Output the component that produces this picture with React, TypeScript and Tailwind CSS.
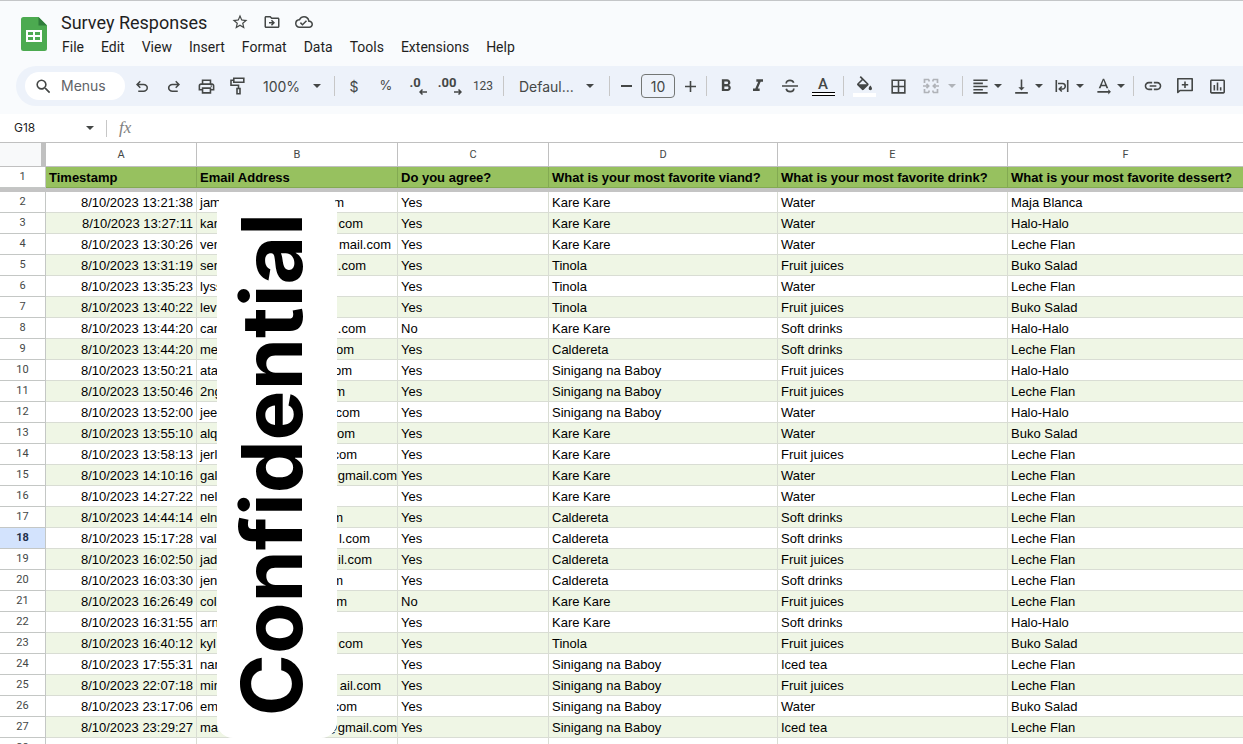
import type { ReactNode } from 'react'
import {
  MdBorderAll,
  MdFormatAlignLeft,
  MdFormatBold,
  MdFormatItalic,
  MdInsertChartOutlined,
  MdLink,
  MdOutlineCloudDone,
  MdOutlineDriveFileMove,
  MdOutlinePrint,
  MdSearch,
  MdStarBorder,
  MdTextRotationNone,
  MdVerticalAlignBottom,
} from 'react-icons/md'

interface ResponseRow {
  time: string
  emailStart: string
  emailEnd: string
  // space between the end of the address and the column edge
  emailGap: number
  agree: string
  viand: string
  drink: string
  dessert: string
}

const row = (
  time: string,
  emailStart: string,
  emailEnd: string,
  emailGap: number,
  agree: string,
  viand: string,
  drink: string,
  dessert: string
): ResponseRow => ({ time, emailStart, emailEnd, emailGap, agree, viand, drink, dessert })

const responses: ResponseRow[] = [
  row('13:21:38', 'jam', 'm', 53, 'Yes', 'Kare Kare', 'Water', 'Maja Blanca'),
  row('13:27:11', 'kan', 'com', 34, 'Yes', 'Kare Kare', 'Water', 'Halo-Halo'),
  row('13:30:26', 'ven', 'mail.com', 6, 'Yes', 'Kare Kare', 'Water', 'Leche Flan'),
  row('13:31:19', 'sen', '.com', 31, 'Yes', 'Tinola', 'Fruit juices', 'Buko Salad'),
  row('13:35:23', 'lyss', '', 0, 'Yes', 'Tinola', 'Water', 'Leche Flan'),
  row('13:40:22', 'lev', '', 0, 'Yes', 'Tinola', 'Fruit juices', 'Buko Salad'),
  row('13:44:20', 'can', '.com', 31, 'No', 'Kare Kare', 'Soft drinks', 'Halo-Halo'),
  row('13:44:20', 'me', 'om', 43, 'Yes', 'Caldereta', 'Soft drinks', 'Leche Flan'),
  row('13:50:21', 'ata', 'om', 45, 'Yes', 'Sinigang na Baboy', 'Fruit juices', 'Halo-Halo'),
  row('13:50:46', '2ng', 'm', 52, 'Yes', 'Sinigang na Baboy', 'Fruit juices', 'Leche Flan'),
  row('13:52:00', 'jee', 'com', 37, 'Yes', 'Sinigang na Baboy', 'Water', 'Halo-Halo'),
  row('13:55:10', 'alq', 'om', 42, 'Yes', 'Kare Kare', 'Water', 'Buko Salad'),
  row('13:58:13', 'jerl', 'com', 40, 'Yes', 'Kare Kare', 'Fruit juices', 'Leche Flan'),
  row('14:10:16', 'gal', 'gmail.com', 0, 'Yes', 'Kare Kare', 'Water', 'Leche Flan'),
  row('14:27:22', 'nel', '', 0, 'Yes', 'Kare Kare', 'Water', 'Leche Flan'),
  row('14:44:14', 'eln', 'm', 54, 'Yes', 'Caldereta', 'Soft drinks', 'Leche Flan'),
  row('15:17:28', 'val', 'l.com', 27, 'Yes', 'Caldereta', 'Soft drinks', 'Leche Flan'),
  row('16:02:50', 'jad', 'il.com', 25, 'Yes', 'Caldereta', 'Fruit juices', 'Leche Flan'),
  row('16:03:30', 'jen', 'm', 54, 'Yes', 'Caldereta', 'Soft drinks', 'Leche Flan'),
  row('16:26:49', 'col', 'm', 50, 'No', 'Kare Kare', 'Fruit juices', 'Leche Flan'),
  row('16:31:55', 'arn', '', 0, 'Yes', 'Kare Kare', 'Soft drinks', 'Halo-Halo'),
  row('16:40:12', 'kyl', 'com', 34, 'Yes', 'Tinola', 'Fruit juices', 'Buko Salad'),
  row('17:55:31', 'nan', '', 0, 'Yes', 'Sinigang na Baboy', 'Iced tea', 'Leche Flan'),
  row('22:07:18', 'min', 'ail.com', 16, 'Yes', 'Sinigang na Baboy', 'Fruit juices', 'Leche Flan'),
  row('23:17:06', 'em', 'com', 40, 'Yes', 'Sinigang na Baboy', 'Water', 'Buko Salad'),
  row('23:29:27', 'ma', '@gmail.com', 0, 'Yes', 'Sinigang na Baboy', 'Iced tea', 'Leche Flan'),
]

const menus = ['File', 'Edit', 'View', 'Insert', 'Format', 'Data', 'Tools', 'Extensions', 'Help']

const headings = [
  'Timestamp',
  'Email Address',
  'Do you agree?',
  'What is your most favorite viand?',
  'What is your most favorite drink?',
  'What is your most favorite dessert?',
]

function SheetsLogo() {
  return (
    <svg viewBox="0 0 26 34" className="h-[34px] w-[26px] shrink-0" aria-hidden="true">
      <path d="M2.500 0H17.500l8.500 8.500v23a2.500 2.500 0 0 1-2.500 2.500h-21A2.500 2.500 0 0 1 0 31.500v-29A2.500 2.500 0 0 1 2.500 0z" fill="#4caa50" />
      <path d="M17.500 0l8.500 8.500h-8.500z" fill="#2f7d3b" />
      <path d="M5 13h16v12H5zM7 15v3h5v-3zM14 15v3h5v-3zM7 20v3h5v-3zM14 20v3h5v-3z" fill="#fff" fillRule="evenodd" />
    </svg>
  )
}

function UndoIcon() {
  return (
    <svg viewBox="0 -1000 960 960" className="size-[18px]" fill="currentColor">
      <path d="M280-200v-80h284q63 0 109.500-40T720-420q0-60-46.500-100T564-560H312l104 104-56 56-200-200 200-200 56 56-104 104h252q97 0 169.500 63T800-420q0 94-72.500 157T564-200H280Z" />
    </svg>
  )
}

function RedoIcon() {
  return (
    <svg viewBox="0 -1000 960 960" className="size-[18px]" fill="currentColor">
      <path d="M396-200q-97 0-169.500-63T154-420q0-94 72.500-157T396-640h252L544-744l56-56 200 200-200 200-56-56 104-104H396q-63 0-109.500 40T240-420q0 60 46.500 100T396-280h284v80H396Z" />
    </svg>
  )
}

function PaintRollerIcon() {
  return (
    <svg viewBox="0 0 18 18" className="size-[18px]" fill="none" stroke="currentColor" strokeWidth="1.600">
      <path d="M4.800 1.300h10v4h-10zM4.800 3.300H2v5h7.500v3.200M8 11.500h3v5.200H8z" />
    </svg>
  )
}

function FillIcon() {
  return (
    <svg viewBox="2 0 20 18" className="h-[15px] w-[17px]" fill="currentColor">
      <path d="M16.560 8.940L7.620 0 6.210 1.410l2.380 2.380-5.150 5.150a1.490 1.490 0 0 0 0 2.120l5.500 5.500c.29.29.68.44 1.060.44s.77-.15 1.060-.44l5.500-5.500c.59-.58.59-1.530 0-2.120zM5.210 10L10 5.210 14.790 10H5.210zM19 11.500s-2 2.170-2 3.500c0 1.100.9 2 2 2s2-.9 2-2c0-1.330-2-3.500-2-3.500z" />
    </svg>
  )
}

function StrikeIcon() {
  return (
    <svg viewBox="0 0 18 18" className="size-[18px]" fill="none" stroke="currentColor" strokeWidth="1.700">
      <path d="M1 9h16M5.200 6.600c0-2 1.600-3.300 3.800-3.300 1.900 0 3.200.8 3.700 2.400M5.200 11.800c.4 1.800 1.800 2.900 3.900 2.900 2.200 0 3.700-1.200 3.700-3.100" />
    </svg>
  )
}

function MergeIcon() {
  return (
    <svg viewBox="0 0 18 18" className="size-[18px]" fill="none" stroke="currentColor" strokeWidth="1.700">
      <path d="M7 2.500H2.500V6M2.500 12v3.500H7M11 2.500h4.500V6M15.500 12v3.500H11M7 2.500v2M7 13.500v2M11 2.500v2M11 13.500v2M1 9h5.500M17 9h-5.500M4.500 6.800L6.700 9l-2.200 2.200M13.500 6.800L11.300 9l2.200 2.200" />
    </svg>
  )
}

function WrapIcon() {
  return (
    <svg viewBox="0 0 18 18" className="size-[18px]" fill="none" stroke="currentColor" strokeWidth="1.600">
      <path d="M3.300 3v12M14.700 3v12M5 6.500h4.500a2.700 2.700 0 0 1 0 5.500H7M8.800 9.500L6.300 12l2.500 2.500" />
    </svg>
  )
}

function CommentIcon() {
  return (
    <svg viewBox="0 0 18 18" className="size-[18px]" fill="none" stroke="currentColor" strokeWidth="1.600">
      <path d="M1.800 15.500V1.800h14.400v11.700H4z" strokeLinejoin="round" />
      <path d="M9 4.500v6.400M5.800 7.700h6.400" />
    </svg>
  )
}

function DecimalIcon({ digits, arrow }: { digits: string; arrow: 'left' | 'right' }) {
  return (
    <span className="flex flex-col items-end">
      <span className="pr-[6px] font-['Roboto',sans-serif] text-[13px] leading-3 font-bold">{digits}</span>
      <svg viewBox="0 0 8 6" className="h-[6px] w-2" fill="none" stroke="currentColor" strokeWidth="1.500">
        <path d={arrow === 'left' ? 'M8 3H1M3.500.5L1 3l2.500 2.500' : 'M0 3h7M4.500.5L7 3 4.500 5.500'} />
      </svg>
    </span>
  )
}

function Separator() {
  return <span className="mx-[3px] h-5 w-px shrink-0 bg-[#c7c7c7]" />
}

interface ToolButtonProps {
  label: string
  wide?: boolean
  children: ReactNode
}

function ToolButton({ label, wide, children }: ToolButtonProps) {
  return (
    <button
      type="button"
      aria-label={label}
      className={`flex h-7 shrink-0 items-center justify-center ${wide ? 'w-[34px]' : 'w-8'}`}
    >
      {children}
    </button>
  )
}

function Caret() {
  return (
    <svg viewBox="0 0 8 4" className="h-1 w-2 shrink-0" fill="currentColor" aria-hidden="true">
      <path d="M0 0h8L4 4z" />
    </svg>
  )
}

function MenuToolButton({ label, children }: ToolButtonProps) {
  return (
    <button type="button" aria-label={label} className="flex h-7 w-[41px] shrink-0 items-center">
      <span className="flex w-7 justify-center">{children}</span>
      <Caret />
    </button>
  )
}

function Header() {
  return (
    <header className="flex items-start border-t border-[#c4c6c8] pt-[7px] pl-[21px]">
      <div className="pt-[9px]">
        <SheetsLogo />
      </div>
      <div className="pl-[6px]">
        <div className="flex h-7 items-center text-[#444746]">
          <input
            aria-label="Document name"
            defaultValue="Survey Responses"
            className="w-[174px] bg-transparent pl-2 font-['Roboto',sans-serif] text-[18px] text-[#1f1f1f] outline-none"
          />
          <div className="flex items-center gap-[14px] pl-1">
            <button type="button" aria-label="Star">
              <MdStarBorder size={18} />
            </button>
            <button type="button" aria-label="Move">
              <MdOutlineDriveFileMove size={18} />
            </button>
            <button type="button" aria-label="Document status">
              <MdOutlineCloudDone size={18} />
            </button>
          </div>
        </div>
        <nav className="flex h-[22px] items-center gap-px pl-px font-['Roboto',sans-serif] text-[14px] text-[#1f1f1f]">
          {menus.map((menu) => (
            <button key={menu} type="button" className="px-2">
              {menu}
            </button>
          ))}
        </nav>
      </div>
    </header>
  )
}

function Toolbar() {
  return (
    <div className="mt-2 ml-4 flex h-10 items-center overflow-hidden rounded-l-full bg-[#edf2fa] pl-[9px] text-[#444746]">
      <label className="mr-px flex h-7 w-[100px] shrink-0 items-center rounded-full bg-white pl-[9px]">
        <MdSearch size={19} />
        <input
          aria-label="Menus"
          placeholder="Menus"
          className="ml-2 w-14 bg-transparent pb-px text-[14px] outline-none placeholder:text-[#5f6368]"
        />
      </label>
      <ToolButton label="Undo">
        <UndoIcon />
      </ToolButton>
      <ToolButton label="Redo">
        <RedoIcon />
      </ToolButton>
      <ToolButton label="Print">
        <MdOutlinePrint size={19} />
      </ToolButton>
      <ToolButton label="Paint format">
        <PaintRollerIcon />
      </ToolButton>
      <label className="flex w-[77px] shrink-0 items-center pl-[9px]">
        <select aria-label="Zoom" className="w-[50px] appearance-none bg-transparent text-[14px] outline-none">
          <option>100%</option>
        </select>
        <Caret />
      </label>
      <Separator />
      <ToolButton label="Format as currency">
        <span className="text-[14px]">$</span>
      </ToolButton>
      <ToolButton label="Format as percent">
        <span className="text-[13px]">%</span>
      </ToolButton>
      <ToolButton label="Decrease decimal places">
        <DecimalIcon digits=".0" arrow="left" />
      </ToolButton>
      <ToolButton label="Increase decimal places">
        <DecimalIcon digits=".00" arrow="right" />
      </ToolButton>
      <ToolButton label="More formats" wide>
        <span className="font-['Roboto',sans-serif] text-[12px]">123</span>
      </ToolButton>
      <Separator />
      <label className="flex w-[99px] shrink-0 items-center pl-3">
        <select aria-label="Font" className="w-[67px] appearance-none bg-transparent text-[14px] outline-none">
          <option>Defaul...</option>
        </select>
        <Caret />
      </label>
      <Separator />
      <div className="flex w-[90px] shrink-0 items-center justify-between">
        <button type="button" aria-label="Decrease font size" className="flex w-[26px] justify-center">
          <span className="h-[2px] w-[11px] bg-[#444746]" />
        </button>
        <input
          aria-label="Font size"
          defaultValue="10"
          className="h-6 w-[34px] rounded-[4px] border border-[#747775] bg-transparent text-center text-[14px] outline-none"
        />
        <button type="button" aria-label="Increase font size" className="flex w-[26px] justify-center">
          <svg viewBox="0 0 11 11" className="size-[11px]" fill="currentColor">
            <path d="M4.700 0h1.600v4.700H11v1.600H6.300V11H4.700V6.300H0V4.700h4.700z" />
          </svg>
        </button>
      </div>
      <Separator />
      <ToolButton label="Bold">
        <MdFormatBold size={20} />
      </ToolButton>
      <ToolButton label="Italic">
        <MdFormatItalic size={20} />
      </ToolButton>
      <ToolButton label="Strikethrough">
        <StrikeIcon />
      </ToolButton>
      <ToolButton label="Text color" wide>
        <span className="flex flex-col items-center">
          <span className="font-['Roboto',sans-serif] text-[15px] leading-4 font-medium">A</span>
          <span className="h-1 w-[23px] border-y border-black bg-white" />
        </span>
      </ToolButton>
      <Separator />
      <ToolButton label="Fill color" wide>
        <span className="flex flex-col items-center gap-[2px]">
          <FillIcon />
          <span className="h-1 w-[23px] bg-white" />
        </span>
      </ToolButton>
      <ToolButton label="Borders" wide>
        <MdBorderAll size={19} />
      </ToolButton>
      <button
        type="button"
        aria-label="Merge cells"
        disabled
        className="flex h-7 w-11 shrink-0 items-center gap-px text-[#b0b3b8]"
      >
        <span className="flex w-8 justify-center">
          <MergeIcon />
        </span>
        <Caret />
      </button>
      <Separator />
      <MenuToolButton label="Horizontal align">
        <MdFormatAlignLeft size={19} />
      </MenuToolButton>
      <MenuToolButton label="Vertical align">
        <MdVerticalAlignBottom size={19} />
      </MenuToolButton>
      <MenuToolButton label="Text wrapping">
        <WrapIcon />
      </MenuToolButton>
      <MenuToolButton label="Text rotation">
        <MdTextRotationNone size={21} />
      </MenuToolButton>
      <Separator />
      <ToolButton label="Insert link">
        <MdLink size={20} />
      </ToolButton>
      <ToolButton label="Insert comment">
        <CommentIcon />
      </ToolButton>
      <ToolButton label="Insert chart">
        <MdInsertChartOutlined size={19} />
      </ToolButton>
    </div>
  )
}

function FormulaBar() {
  return (
    <div className="mt-2 flex h-7 items-center bg-white text-[#444746]">
      <input
        aria-label="Name box"
        defaultValue="G18"
        className="w-20 bg-transparent pl-[14px] text-[12px] text-[#1f1f1f] outline-none"
      />
      <button type="button" aria-label="Named ranges" className="flex w-5 justify-center">
        <Caret />
      </button>
      <span className="ml-[6px] h-[17px] w-px bg-[#c7c7c7]" />
      <label htmlFor="formula" className="pl-3 font-['Liberation_Serif',serif] text-[17px] text-[#808080] italic">
        fx
      </label>
      <input id="formula" className="ml-2 flex-1 bg-transparent text-[13px] outline-none" />
    </div>
  )
}

const cell =
  'h-[21px] truncate border-r border-b border-[#d9ddd4] px-[3px] pt-px pb-0 leading-[19px] last:border-r-0'
const rowNumber =
  "border-r border-b border-[#c4c7c5] p-0 pb-px text-center font-['Roboto',sans-serif] text-[11px] leading-[19px]"

function Sheet() {
  return (
    <main className="relative min-h-0 flex-1 overflow-hidden border-t border-[#c0c0c0] bg-white">
      <table className="w-full table-fixed border-separate border-spacing-0 font-['Liberation_Sans',Arial,sans-serif] text-[13px] text-black">
        <colgroup>
          <col className="w-[46px]" />
          <col className="w-[151px]" />
          <col className="w-[201px]" />
          <col className="w-[151px]" />
          <col className="w-[229px]" />
          <col className="w-[230px]" />
          <col />
        </colgroup>
        <thead>
          <tr>
            <td className="h-6 border-r-[5px] border-b border-[#c0c0c0] bg-[#f8f9fa] p-0" />
            {['A', 'B', 'C', 'D', 'E', 'F'].map((letter) => (
              <th
                key={letter}
                scope="col"
                className="h-6 border-r border-b border-[#c0c0c0] p-0 font-['Roboto',sans-serif] text-[11px] leading-5 font-normal text-[#444746] last:border-r-0"
              >
                {letter}
              </th>
            ))}
          </tr>
          <tr>
            <th scope="row" className={`${rowNumber} font-normal text-[#444746]`}>
              1
            </th>
            {headings.map((heading) => (
              <th
                key={heading}
                scope="col"
                className="h-[21px] border-r border-b border-[#83aa52] bg-[#97c15f] px-[3px] pt-px pb-0 text-left leading-[19px] font-bold whitespace-nowrap last:border-r-0"
              >
                {heading}
              </th>
            ))}
          </tr>
          <tr>
            <td colSpan={7} className="h-1 bg-[#c4c4c4] p-0" />
          </tr>
        </thead>
        <tbody>
          {responses.map((response, index) => {
            const number = index + 2
            const selected = number === 18
            return (
              <tr key={number} className={index % 2 === 1 ? 'bg-[#eff6e5]' : 'bg-white'}>
                <th
                  scope="row"
                  className={`${rowNumber} ${selected ? 'bg-[#d3e3fd] font-bold text-[#1f2f4a]' : 'bg-white font-normal text-[#444746]'}`}
                >
                  {number}
                </th>
                <td className={`${cell} text-right`}>8/10/2023 {response.time}</td>
                <td className="h-[21px] border-r border-b border-[#d9ddd4] pt-px pb-0 pl-[3px] leading-[19px]">
                  <div className="flex justify-between">
                    <span>{response.emailStart}</span>
                    <span style={{ paddingRight: response.emailGap }}>{response.emailEnd}</span>
                  </div>
                </td>
                <td className={cell}>{response.agree}</td>
                <td className={cell}>{response.viand}</td>
                <td className={cell}>{response.drink}</td>
                <td className={cell}>{response.dessert}</td>
              </tr>
            )
          })}
          <tr>
            <th scope="row" className={`${rowNumber} font-normal text-[#444746]`}>
              28
            </th>
            {headings.map((heading) => (
              <td key={heading} className={cell} />
            ))}
          </tr>
        </tbody>
      </table>

      {/* Cover over the email addresses */}
      <div className="absolute top-[49px] left-[217px] flex h-[546px] w-[120px] items-center justify-center rounded-2xl bg-white pr-[10px]">
        <span className="rotate-180 font-['Inter',sans-serif] text-[84px] leading-none font-bold text-black [writing-mode:vertical-rl]">
          Confidential
        </span>
      </div>
    </main>
  )
}

export default function App() {
  return (
    <div className="flex h-screen flex-col overflow-hidden bg-[#f9fbfd] font-['Inter',sans-serif]">
      <Header />
      <Toolbar />
      <FormulaBar />
      <Sheet />
    </div>
  )
}
